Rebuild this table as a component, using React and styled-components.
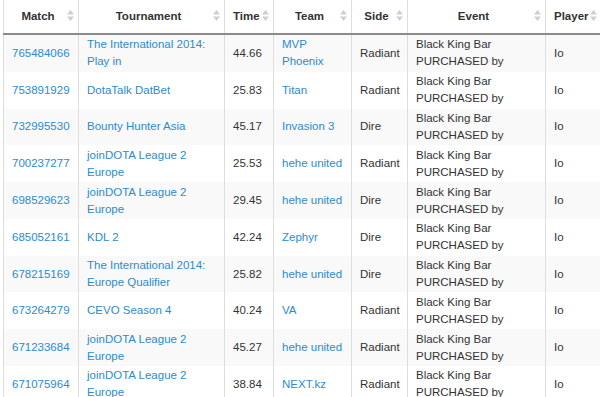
import React from 'react'
import styled, { createGlobalStyle } from 'styled-components'

const GlobalStyle = createGlobalStyle`
  * { box-sizing: border-box; }
  html, body { margin: 0; padding: 0; background: #fff; overflow: hidden; }
  body {
    font-family: "Liberation Sans", Arial, sans-serif;
    font-size: 11.5px;
    color: #333;
  }
`

const Wrap = styled.div`
  padding-left: 3px;
  width: 602px;
`

const Table = styled.table`
  width: 598px;
  table-layout: fixed;
  border-collapse: collapse;
  border-spacing: 0;
`

const Th = styled.th`
  position: relative;
  padding: 8px 14px 8px 8px;
  line-height: 17px;
  font-weight: bold;
  text-align: center;
  border-left: 1px solid #ddd;
  border-right: 1px solid #ddd;
  border-bottom: 2px solid #8a8a8a;
  white-space: nowrap;
`

const SortIcon = styled.svg`
  position: absolute;
  right: 4px;
  top: 9px;
  width: 7px;
  height: 13px;
`

const Row = styled.tr`
  background: ${p => (p.$odd ? '#f9f9f9' : '#fff')};
`

const Td = styled.td`
  padding: 1.4px 8px;
  line-height: 17px;
  vertical-align: middle;
  border-left: 1px solid #ddd;
  border-right: 1px solid #ddd;
`

const Link = styled.a`
  color: #2a8ccf;
  text-decoration: none;
`

const columns = [
  { label: 'Match', width: 75 },
  { label: 'Tournament', width: 146 },
  { label: 'Time', width: 49 },
  { label: 'Team', width: 78 },
  { label: 'Side', width: 56 },
  { label: 'Event', width: 138 },
  { label: 'Player', width: 56 },
]

const rows = [
  ['765484066', 'The International 2014: Play in', '44.66', 'MVP Phoenix', 'Radiant'],
  ['753891929', 'DotaTalk DatBet', '25.83', 'Titan', 'Radiant'],
  ['732995530', 'Bounty Hunter Asia', '45.17', 'Invasion 3', 'Dire'],
  ['700237277', 'joinDOTA League 2 Europe', '25.53', 'hehe united', 'Radiant'],
  ['698529623', 'joinDOTA League 2 Europe', '29.45', 'hehe united', 'Dire'],
  ['685052161', 'KDL 2', '42.24', 'Zephyr', 'Dire'],
  ['678215169', 'The International 2014: Europe Qualifier', '25.82', 'hehe united', 'Dire'],
  ['673264279', 'CEVO Season 4', '40.24', 'VA', 'Radiant'],
  ['671233684', 'joinDOTA League 2 Europe', '45.27', 'hehe united', 'Radiant'],
  ['671075964', 'joinDOTA League 2 Europe', '38.84', 'NEXT.kz', 'Radiant'],
]

const Sort = () => (
  <SortIcon viewBox="0 0 7 13">
    <polygon points="0,5.5 3.5,1 7,5.5" fill="#cfcfcf" />
    <polygon points="0,7.5 7,7.5 3.5,12" fill="#cfcfcf" />
  </SortIcon>
)

export default function App() {
  return (
    <Wrap>
      <GlobalStyle />
      <Table>
        <colgroup>
          {columns.map(c => <col key={c.label} style={{ width: c.width }} />)}
        </colgroup>
        <thead>
          <tr>
            {columns.map(c => (
              <Th key={c.label}>
                {c.label}
                <Sort />
              </Th>
            ))}
          </tr>
        </thead>
        <tbody>
          {rows.map((r, i) => (
            <Row key={r[0]} $odd={i % 2 === 0}>
              <Td><Link href="#">{r[0]}</Link></Td>
              <Td><Link href="#">{r[1]}</Link></Td>
              <Td>{r[2]}</Td>
              <Td><Link href="#">{r[3]}</Link></Td>
              <Td>{r[4]}</Td>
              <Td>Black King Bar PURCHASED by</Td>
              <Td>Io</Td>
            </Row>
          ))}
        </tbody>
      </Table>
    </Wrap>
  )
}
